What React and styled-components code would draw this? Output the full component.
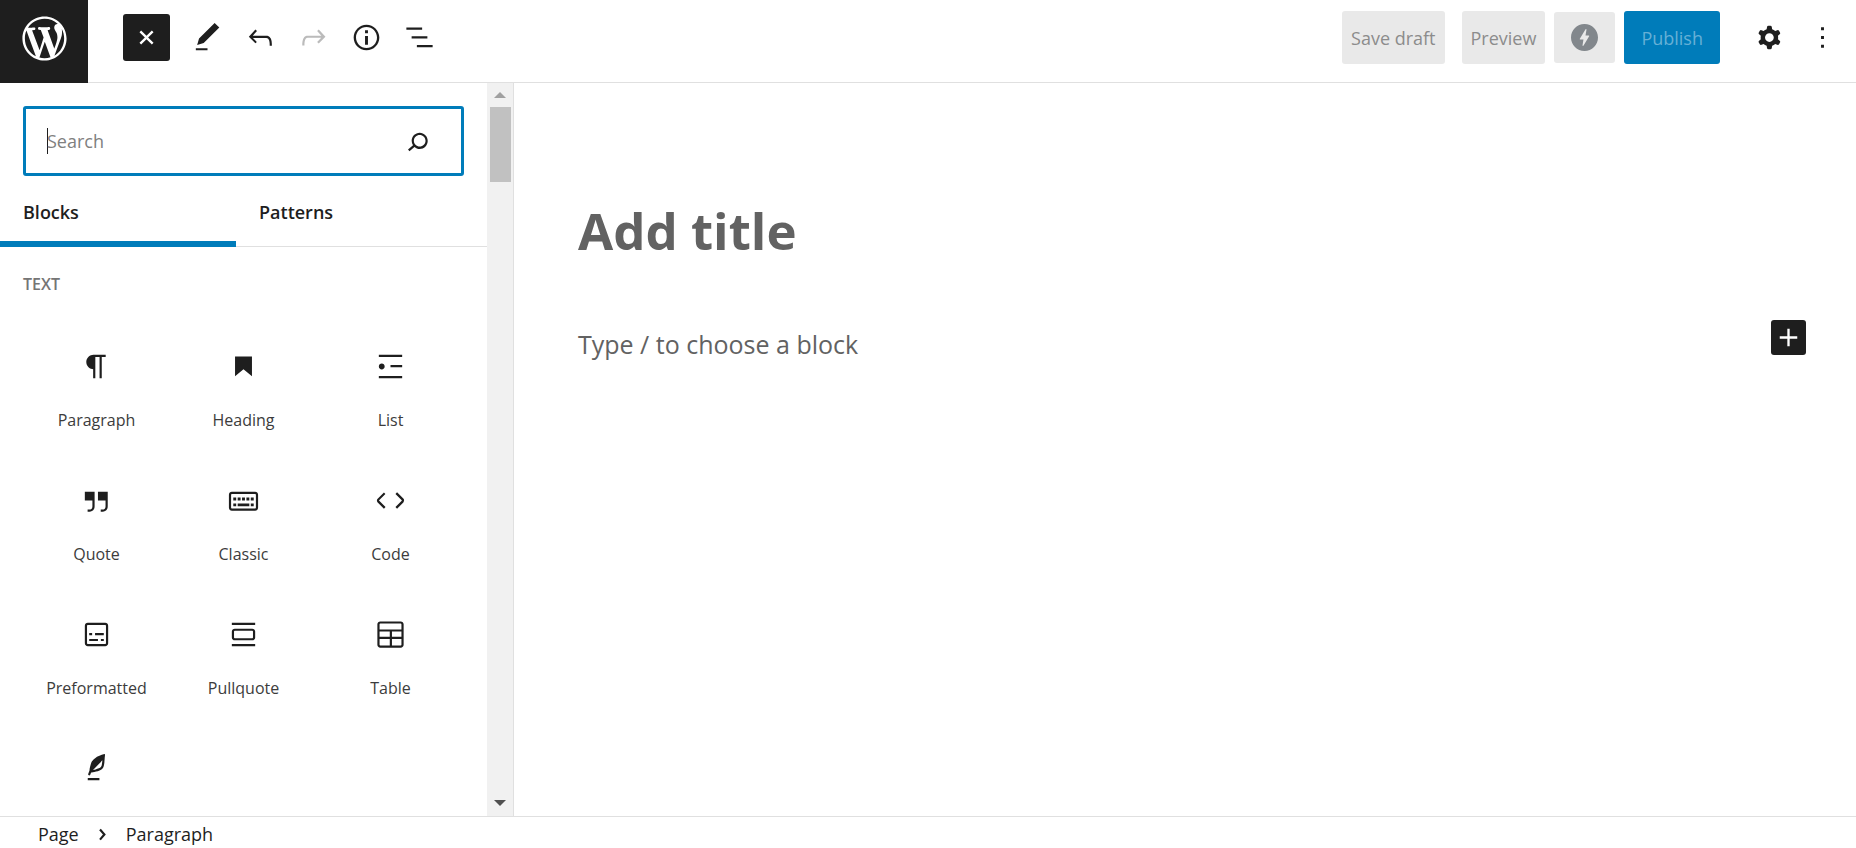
import React, { useState } from 'react'
import styled, { createGlobalStyle, css } from 'styled-components'

const GlobalStyle = createGlobalStyle`
  *, *::before, *::after {
    box-sizing: border-box;
  }
  body {
    margin: 0;
    background: #fff;
    color: #1e1e1e;
    font-family: 'Open Sans', 'Noto Sans', sans-serif;
    font-size: 18px;
  }
  button, input, textarea {
    font: inherit;
    color: inherit;
  }
`

const paths = {
  wordpress: 'M20 10c0-5.51-4.49-10-10-10C4.48 0 0 4.49 0 10c0 5.52 4.48 10 10 10 5.51 0 10-4.48 10-10zM7.78 15.37L4.37 6.22c.55-.02 1.17-.08 1.17-.08.5-.06.44-1.13-.06-1.11 0 0-1.45.11-2.37.11-.18 0-.37 0-.58-.01C4.12 2.69 6.87 1.11 10 1.11c2.33 0 4.45.87 6.05 2.34-.68-.11-1.65.39-1.65 1.58 0 .74.45 1.36.9 2.1.35.61.55 1.36.55 2.46 0 1.49-1.4 5-1.4 5l-3.03-8.37c.54-.02.82-.17.82-.17.5-.05.44-1.25-.06-1.22 0 0-1.44.12-2.38.12-.87 0-2.33-.12-2.33-.12-.5-.03-.56 1.2-.06 1.22l.92.08 1.26 3.41zM17.41 10c.24-.64.74-1.87.43-4.25.7 1.29 1.05 2.71 1.05 4.25 0 3.29-1.73 6.24-4.4 7.78.97-2.59 1.94-5.2 2.92-7.78zM6.1 18.09C3.12 16.65 1.11 13.53 1.11 10c0-1.3.23-2.48.72-3.59C3.25 10.3 4.67 14.2 6.1 18.09zm4.03-6.63l2.58 6.98c-.86.29-1.76.45-2.71.45-.79 0-1.57-.11-2.29-.33.81-2.38 1.62-4.74 2.42-7.1z',
  plus: 'M18 11.2h-5.2V6h-1.6v5.2H6v1.6h5.2V18h1.6v-5.2H18z',
  edit: 'M20.1 5.1L16.9 2 6.2 12.7l-1.3 4.4 4.5-1.3L20.1 5.1zM4 20.8h8v-1.5H4v1.5z',
  undo: 'M18.3 11.7c-.6-.6-1.4-.9-2.3-.9H6.7l2.9-3.3-1.1-1-4.5 5L8.5 16l1-1-2.7-2.7H16c.5 0 .9.2 1.3.5 1 1 1 3.4 1 4.5v.3h1.5v-.2c0-1.5 0-4.3-1.5-5.7z',
  redo: 'M15.6 6.5l-1.1 1 2.9 3.3H8c-.9 0-1.7.3-2.3.9-1.4 1.5-1.4 4.2-1.4 5.6v.2h1.5v-.3c0-1.1 0-3.5 1-4.5.3-.3.7-.5 1.3-.5h9.2L14.5 15l1.1 1.1 4.6-4.6-4.6-5z',
  info: 'M12 3.2c-4.8 0-8.8 3.9-8.8 8.8 0 4.8 3.9 8.8 8.8 8.8 4.8 0 8.8-3.9 8.8-8.8 0-4.8-4-8.8-8.8-8.8zm0 16c-4 0-7.2-3.3-7.2-7.2C4.8 8 8 4.8 12 4.8s7.2 3.3 7.2 7.2c0 4-3.2 7.2-7.2 7.2zM11 17h2v-6h-2v6zm0-8h2V7h-2v2z',
  outline: 'M13.8 5.2H3v1.5h10.8V5.2zm-3.6 12v1.5H21v-1.5H10.2zm7.2-6H6.6v1.5h10.8v-1.5z',
  cog: 'M10.289 4.836A1 1 0 0111.275 4h1.306a1 1 0 01.987.836l.244 1.466c.787.26 1.503.679 2.108 1.218l1.393-.522a1 1 0 011.216.437l.653 1.13a1 1 0 01-.23 1.273l-1.148.944a6.025 6.025 0 010 2.435l1.149.946a1 1 0 01.23 1.272l-.653 1.13a1 1 0 01-1.216.437l-1.394-.522c-.605.54-1.32.958-2.108 1.218l-.244 1.466a1 1 0 01-.987.836h-1.306a1 1 0 01-.986-.836l-.244-1.466a5.995 5.995 0 01-2.108-1.218l-1.394.522a1 1 0 01-1.217-.436l-.653-1.131a1 1 0 01.23-1.272l1.149-.946a6.026 6.026 0 010-2.435l-1.148-.944a1 1 0 01-.23-1.272l.653-1.131a1 1 0 011.217-.437l1.393.522a5.994 5.994 0 012.108-1.218l.244-1.466zM14.929 12a3 3 0 11-6 0 3 3 0 016 0z',
  more: 'M13 19h-2v-2h2v2zm0-6h-2v-2h2v2zm0-6h-2V5h2v2z',
  search: 'M13.5 6C10.5 6 8 8.5 8 11.5c0 1.1.3 2.1.9 3l-3.4 3 1 1.1 3.4-2.9c1 .9 2.2 1.4 3.6 1.4 3 0 5.5-2.5 5.5-5.5C19 8.5 16.5 6 13.5 6zm0 9.5c-2.2 0-4-1.8-4-4s1.8-4 4-4 4 1.8 4 4-1.8 4-4 4z',
  chevron: 'M10.86 8.04L14.28 12.03 10.86 16.02 9.72 15.04 12.3 12.03 9.72 9.02z',
  amp: 'M171.887 116.28l-53.696 89.36h-9.728l9.617-58.227-30.2.047a4.852 4.852 0 01-4.855-4.855c0-1.152 1.07-3.102 1.07-3.102l53.52-89.254 9.9.043-9.86 58.317 30.413-.043a4.852 4.852 0 014.855 4.855c0 1.088-.427 2.044-1.033 2.854l.004.004zM128 0C57.306 0 0 57.3 0 128s57.306 128 128 128 128-57.306 128-128S198.7 0 128 0z',
  paragraph: 'M18.3 4H9.9v-.1l-.9.2c-2.3.4-4 2.4-4 4.8s1.7 4.4 4 4.8l.7.1V20h1.5V5.5h2.9V20h1.5V5.5h2.7V4z',
  heading: 'M6.2 5.2v13.4l5.8-4.8 5.8 4.8V5.2z',
  list: 'M4 4v1.5h16V4H4zm8 8.5h8V11h-8v1.5zM4 20h16v-1.5H4V20zm4-8c0-1.1-.9-2-2-2s-2 .9-2 2 .9 2 2 2 2-.9 2-2z',
  quote: 'M13 6v6h5.2v4c0 .8-.2 1.4-.5 1.7-.6.6-1.6.6-2.5.5h-.3v1.5h.5c1 0 2.3-.1 3.3-1 .6-.6 1-1.6 1-2.8V6H13zm-9 6h5.2v4c0 .8-.2 1.4-.5 1.7-.6.6-1.6.6-2.5.5h-.3v1.5h.5c1 0 2.3-.1 3.3-1 .6-.6 1-1.6 1-2.8V6H4v6z',
  classic: 'M20 6H4c-1.1 0-2 .9-2 2v9c0 1.1.9 2 2 2h16c1.1 0 2-.9 2-2V8c0-1.1-.9-2-2-2zm.5 11c0 .3-.2.5-.5.5H4c-.3 0-.5-.2-.5-.5V8c0-.3.2-.5.5-.5h16c.3 0 .5.2.5.5v9zM10 10H8v2h2v-2zm-5 2h2v-2H5v2zm8-2h-2v2h2v-2zm-5 6h8v-2H8v2zm6-4h2v-2h-2v2zm3 0h2v-2h-2v2zm0 4h2v-2h-2v2zM5 16h2v-2H5v2z',
  code: 'M20.8 10.7l-4.3-4.3-1.1 1.1 4.3 4.3c.1.1.1.3 0 .4l-4.3 4.3 1.1 1.1 4.3-4.3c.7-.8.7-1.9 0-2.6zM4.2 11.8l4.3-4.3-1-1-4.3 4.3c-.7.7-.7 1.8 0 2.5l4.3 4.3 1.1-1.1-4.3-4.3c-.2-.1-.2-.3-.1-.4z',
  preformatted: 'M18 4H6c-1.1 0-2 .9-2 2v12c0 1.1.9 2 2 2h12c1.1 0 2-.9 2-2V6c0-1.1-.9-2-2-2zm.5 14c0 .3-.2.5-.5.5H6c-.3 0-.5-.2-.5-.5V6c0-.3.2-.5.5-.5h12c.3 0 .5.2.5.5v12zM7 16.5h6V15H7v1.5zm4-4h6V11h-6v1.5zM9 11H7v1.5h2V11zm6 5.5h2V15h-2v1.5z',
  pullquote: 'M18 8H6c-1.1 0-2 .9-2 2v4c0 1.1.9 2 2 2h12c1.1 0 2-.9 2-2v-4c0-1.1-.9-2-2-2zm.5 6c0 .3-.2.5-.5.5H6c-.3 0-.5-.2-.5-.5v-4c0-.3.2-.5.5-.5h12c.3 0 .5.2.5.5v4zM4 4v1.5h16V4H4zm0 16h16v-1.5H4V20z',
  table: 'M19 3H5c-1.1 0-2 .9-2 2v14c0 1.1.9 2 2 2h14c1.1 0 2-.9 2-2V5c0-1.1-.9-2-2-2zM5 4.5h14c.3 0 .5.2.5.5v3.5h-15V5c0-.3.2-.5.5-.5zm8 5.5h6.5v3.5H13V10zm-1.5 3.5h-7V10h7v3.5zm-7 5.5v-4h7v4.5H5c-.3 0-.5-.2-.5-.5zm14.5.5h-6V15h6.5v4c0 .3-.2.5-.5.5z',
  verse: 'M17.8 2l-.9.3c-.1 0-3.6 1-5.2 2.1C10 5.5 9.3 6.5 8.9 7.1c-.6.9-1.7 4.7-1.7 6.3l-.9 2.3c-.2.4 0 .8.4 1 .1 0 .2.1.3.1.3 0 .6-.2.7-.5l.6-1.5c.3 0 .7-.1 1.2-.2.7-.1 1.4-.3 2.2-.5.8-.2 1.6-.5 2.4-.8.7-.3 1.4-.7 1.9-1.2s.8-1.2 1-1.9c.2-.7.3-1.6.4-2.4.1-.8.1-1.7.2-2.5 0-.8.1-1.5.2-2.1V2zm-1.9 5.6c-.1.8-.2 1.5-.3 2.1-.2.6-.4 1-.6 1.3-.3.3-.8.6-1.4.9-.7.3-1.4.5-2.2.8-.6.2-1.3.3-1.8.4L15 7.5c.3-.3.6-.7 1-1.1 0 .4 0 .8-.1 1.2zM6 20h8v-1.5H6V20z'
}

const Icon = ({ name, size = 35, viewBox = '0 0 24 24', ...rest }) => (
  <svg width={size} height={size} viewBox={viewBox} fill='currentColor' fillRule='evenodd' aria-hidden='true' {...rest}>
    <path d={paths[name]} />
  </svg>
)

const Page = styled.div`
  display: grid;
  grid-template-columns: minmax(0, 514px) minmax(0, 1fr);
  grid-template-rows: auto minmax(0, 1fr) auto;
  grid-template-areas:
    'header header'
    'inserter canvas'
    'footer footer';
  height: 100vh;
`

const Header = styled.header`
  grid-area: header;
  display: flex;
  justify-content: space-between;
  padding-right: 10px;
  border-bottom: 1px solid #e0e0e0;
`

const HeaderGroup = styled.div`
  display: flex;
  align-items: center;
  gap: ${props => props.$gap || '6px'};
  padding-bottom: 7px;
`

const HeaderMenus = styled.div`
  display: flex;
  gap: 6px;
`

const SiteLink = styled.a`
  display: flex;
  justify-content: center;
  width: 88px;
  height: 83px;
  margin: 0 29px -8px 0;
  padding-top: 12px;
  background: #1e1e1e;
  color: #fff;
`

const IconButton = styled.button`
  display: flex;
  align-items: center;
  justify-content: center;
  width: 47px;
  height: 47px;
  padding: 0;
  border: 0;
  border-radius: 3px;
  background: none;
  color: ${props => (props.disabled ? '#bbb' : '#1e1e1e')};
`

const CloseButton = styled(IconButton)`
  margin-right: 8px;
  background: #1e1e1e;
  color: #fff;

  svg {
    transform: rotate(45deg);
  }
`

const HeaderButton = styled.button`
  height: 53px;
  padding: 0 9px;
  border: 0;
  border-radius: 3px;
  background: #e9e9e9;
  color: #8c8c8c;
`

const SaveButton = styled(HeaderButton)`
  margin-right: 8px;
`

const AmpButton = styled(HeaderButton)`
  display: flex;
  align-items: center;
  height: 51px;
  padding: 0 17px;
  color: #82878c;
`

const PublishButton = styled(HeaderButton)`
  margin-right: 17px;
  padding: 0 17px;
  background: #007cba;
  color: #66b0d6;
`

const Inserter = styled.aside`
  grid-area: inserter;
  display: flex;
  border-right: 1px solid #e0e0e0;
`

const InserterContent = styled.div`
  flex: 1;
  min-width: 0;
  overflow: hidden;
`

const SearchBox = styled.div`
  display: flex;
  align-items: center;
  margin: 23px 23px 0;
  height: 70px;
  padding: 0 26px 0 21px;
  border: 3px solid #007cba;
  border-radius: 3px;
`

const SearchInput = styled.input`
  flex: 1;
  min-width: 0;
  height: 48px;
  padding: 0;
  border: 0;
  outline: 0;
  background: none;

  &::placeholder {
    color: #808080;
    opacity: 1;
  }
`

const Caret = styled.span`
  width: 1px;
  height: 26px;
  margin-right: -1px;
  background: #1e1e1e;
`

const Tabs = styled.div`
  display: flex;
  border-bottom: 1px solid #e0e0e0;
`

const Tab = styled.button`
  width: ${props => (props.$grow ? 'auto' : '236px')};
  height: 71px;
  margin-bottom: -1px;
  padding: 0 23px;
  border: 0;
  background: none;
  font-weight: 600;
  text-align: left;
  ${props => props.$active && css`
    box-shadow: inset 0 -6px 0 0 #007cba;
  `}
`

const CategoryTitle = styled.h2`
  margin: 26px 23px 0;
  color: #757575;
  font-size: 16px;
  font-weight: 600;
  line-height: 22px;
  text-transform: uppercase;
`

const BlockGrid = styled.ul`
  display: grid;
  grid-template-columns: repeat(3, 1fr);
  margin: 36px 23px 0;
  padding: 0;
  list-style: none;
`

const BlockButton = styled.button`
  display: flex;
  flex-direction: column;
  align-items: center;
  gap: 22px;
  width: 100%;
  height: 134px;
  padding: 18px 0 0;
  border: 0;
  background: none;
  font-size: 16px;
  line-height: 28px;
`

const BlockLabel = styled.span`
  color: #3c3c3c;
`

const Scrollbar = styled.div`
  display: flex;
  flex-direction: column;
  align-items: center;
  width: 26px;
  padding: 9px 0 10px;
  background: #f1f1f1;
`

const ScrollArrow = styled.span`
  border: 6px solid transparent;
  border-top-width: 0;
  border-bottom: 6px solid #a0a0a0;
  ${props => props.$down && css`
    margin-top: auto;
    border-top: 6px solid #505050;
    border-bottom-width: 0;
  `}
`

const ScrollThumb = styled.span`
  width: 21px;
  height: 75px;
  margin-top: 9px;
  background: #c1c1c1;
`

const Canvas = styled.main`
  grid-area: canvas;
  padding: 112px 50px 0 64px;
  color: #626262;
`

const TitleInput = styled.input`
  display: block;
  width: 100%;
  height: 70px;
  padding: 0;
  border: 0;
  outline: 0;
  font-size: 51px;
  font-weight: 700;

  &::placeholder {
    color: #626262;
    opacity: 1;
  }
`

const EmptyBlock = styled.div`
  display: flex;
  justify-content: space-between;
  align-items: flex-start;
  margin-top: 55px;
`

const Prompt = styled.p`
  margin: 5px 0 0;
  font-size: 25px;
  line-height: 38px;
`

const AddButton = styled(IconButton)`
  width: 35px;
  height: 35px;
  background: #1e1e1e;
  color: #fff;
`

const Footer = styled.footer`
  grid-area: footer;
  border-top: 1px solid #e0e0e0;
`

const Breadcrumb = styled.ol`
  display: flex;
  align-items: center;
  height: 31px;
  margin: 0;
  padding: 3px 38px 0;
  list-style: none;
`

const Crumb = styled.li`
  display: flex;
  align-items: center;
`

const CrumbButton = styled.button`
  padding: 0;
  border: 0;
  background: none;
  line-height: 26px;
`

const Separator = styled(Icon)`
  margin: -4px 6px;
`

const blocks = [
  { icon: 'paragraph', label: 'Paragraph' },
  { icon: 'heading', label: 'Heading' },
  { icon: 'list', label: 'List' },
  { icon: 'quote', label: 'Quote' },
  { icon: 'classic', label: 'Classic' },
  { icon: 'code', label: 'Code' },
  { icon: 'preformatted', label: 'Preformatted' },
  { icon: 'pullquote', label: 'Pullquote' },
  { icon: 'table', label: 'Table' },
  { icon: 'verse' }
]

const EditorHeader = () => (
  <Header>
    <HeaderGroup>
      <SiteLink href='#' aria-label='View pages'>
        <Icon name='wordpress' size={53} viewBox='-2 -2 24 24' />
      </SiteLink>
      <CloseButton aria-label='Toggle block inserter'><Icon name='plus' /></CloseButton>
      <IconButton aria-label='Tools'><Icon name='edit' /></IconButton>
      <IconButton aria-label='Undo'><Icon name='undo' /></IconButton>
      <IconButton aria-label='Redo' disabled><Icon name='redo' /></IconButton>
      <IconButton aria-label='Details'><Icon name='info' /></IconButton>
      <IconButton aria-label='Outline'><Icon name='outline' /></IconButton>
    </HeaderGroup>
    <HeaderGroup $gap='9px'>
      <SaveButton disabled>Save draft</SaveButton>
      <HeaderButton disabled>Preview</HeaderButton>
      <AmpButton disabled aria-label='Preview AMP'>
        <Icon name='amp' size={27} viewBox='0 0 256 256' />
      </AmpButton>
      <PublishButton disabled>Publish</PublishButton>
      <HeaderMenus>
        <IconButton aria-label='Settings'><Icon name='cog' /></IconButton>
        <IconButton aria-label='Options'><Icon name='more' /></IconButton>
      </HeaderMenus>
    </HeaderGroup>
  </Header>
)

const BlockInserter = () => {
  const [tab, setTab] = useState('blocks')
  const [term, setTerm] = useState('')

  return (
    <Inserter>
      <InserterContent>
        <SearchBox>
          {term === '' && <Caret />}
          <SearchInput
            type='text'
            placeholder='Search'
            aria-label='Search for blocks and patterns'
            value={term}
            onChange={e => setTerm(e.target.value)}
          />
          <Icon name='search' />
        </SearchBox>
        <Tabs role='tablist'>
          <Tab role='tab' aria-selected={tab === 'blocks'} $active={tab === 'blocks'} onClick={() => setTab('blocks')}>Blocks</Tab>
          <Tab role='tab' aria-selected={tab === 'patterns'} $grow $active={tab === 'patterns'} onClick={() => setTab('patterns')}>Patterns</Tab>
        </Tabs>
        <CategoryTitle>Text</CategoryTitle>
        <BlockGrid>
          {blocks.map(({ icon, label }) => (
            <li key={icon}>
              <BlockButton aria-label={label || icon}>
                <Icon name={icon} />
                {label && <BlockLabel>{label}</BlockLabel>}
              </BlockButton>
            </li>
          ))}
        </BlockGrid>
      </InserterContent>
      <Scrollbar aria-hidden='true'>
        <ScrollArrow />
        <ScrollThumb />
        <ScrollArrow $down />
      </Scrollbar>
    </Inserter>
  )
}

const App = () => (
  <>
    <GlobalStyle />
    <Page>
      <EditorHeader />
      <BlockInserter />
      <Canvas>
        <TitleInput type='text' placeholder='Add title' aria-label='Add title' />
        <EmptyBlock>
          <Prompt>Type / to choose a block</Prompt>
          <AddButton aria-label='Add block'><Icon name='plus' /></AddButton>
        </EmptyBlock>
      </Canvas>
      <Footer>
        <Breadcrumb aria-label='Block breadcrumb'>
          <Crumb>
            <CrumbButton>Page</CrumbButton>
            <Separator name='chevron' />
          </Crumb>
          <Crumb aria-current='true'>
            <CrumbButton>Paragraph</CrumbButton>
          </Crumb>
        </Breadcrumb>
      </Footer>
    </Page>
  </>
)

export default App
